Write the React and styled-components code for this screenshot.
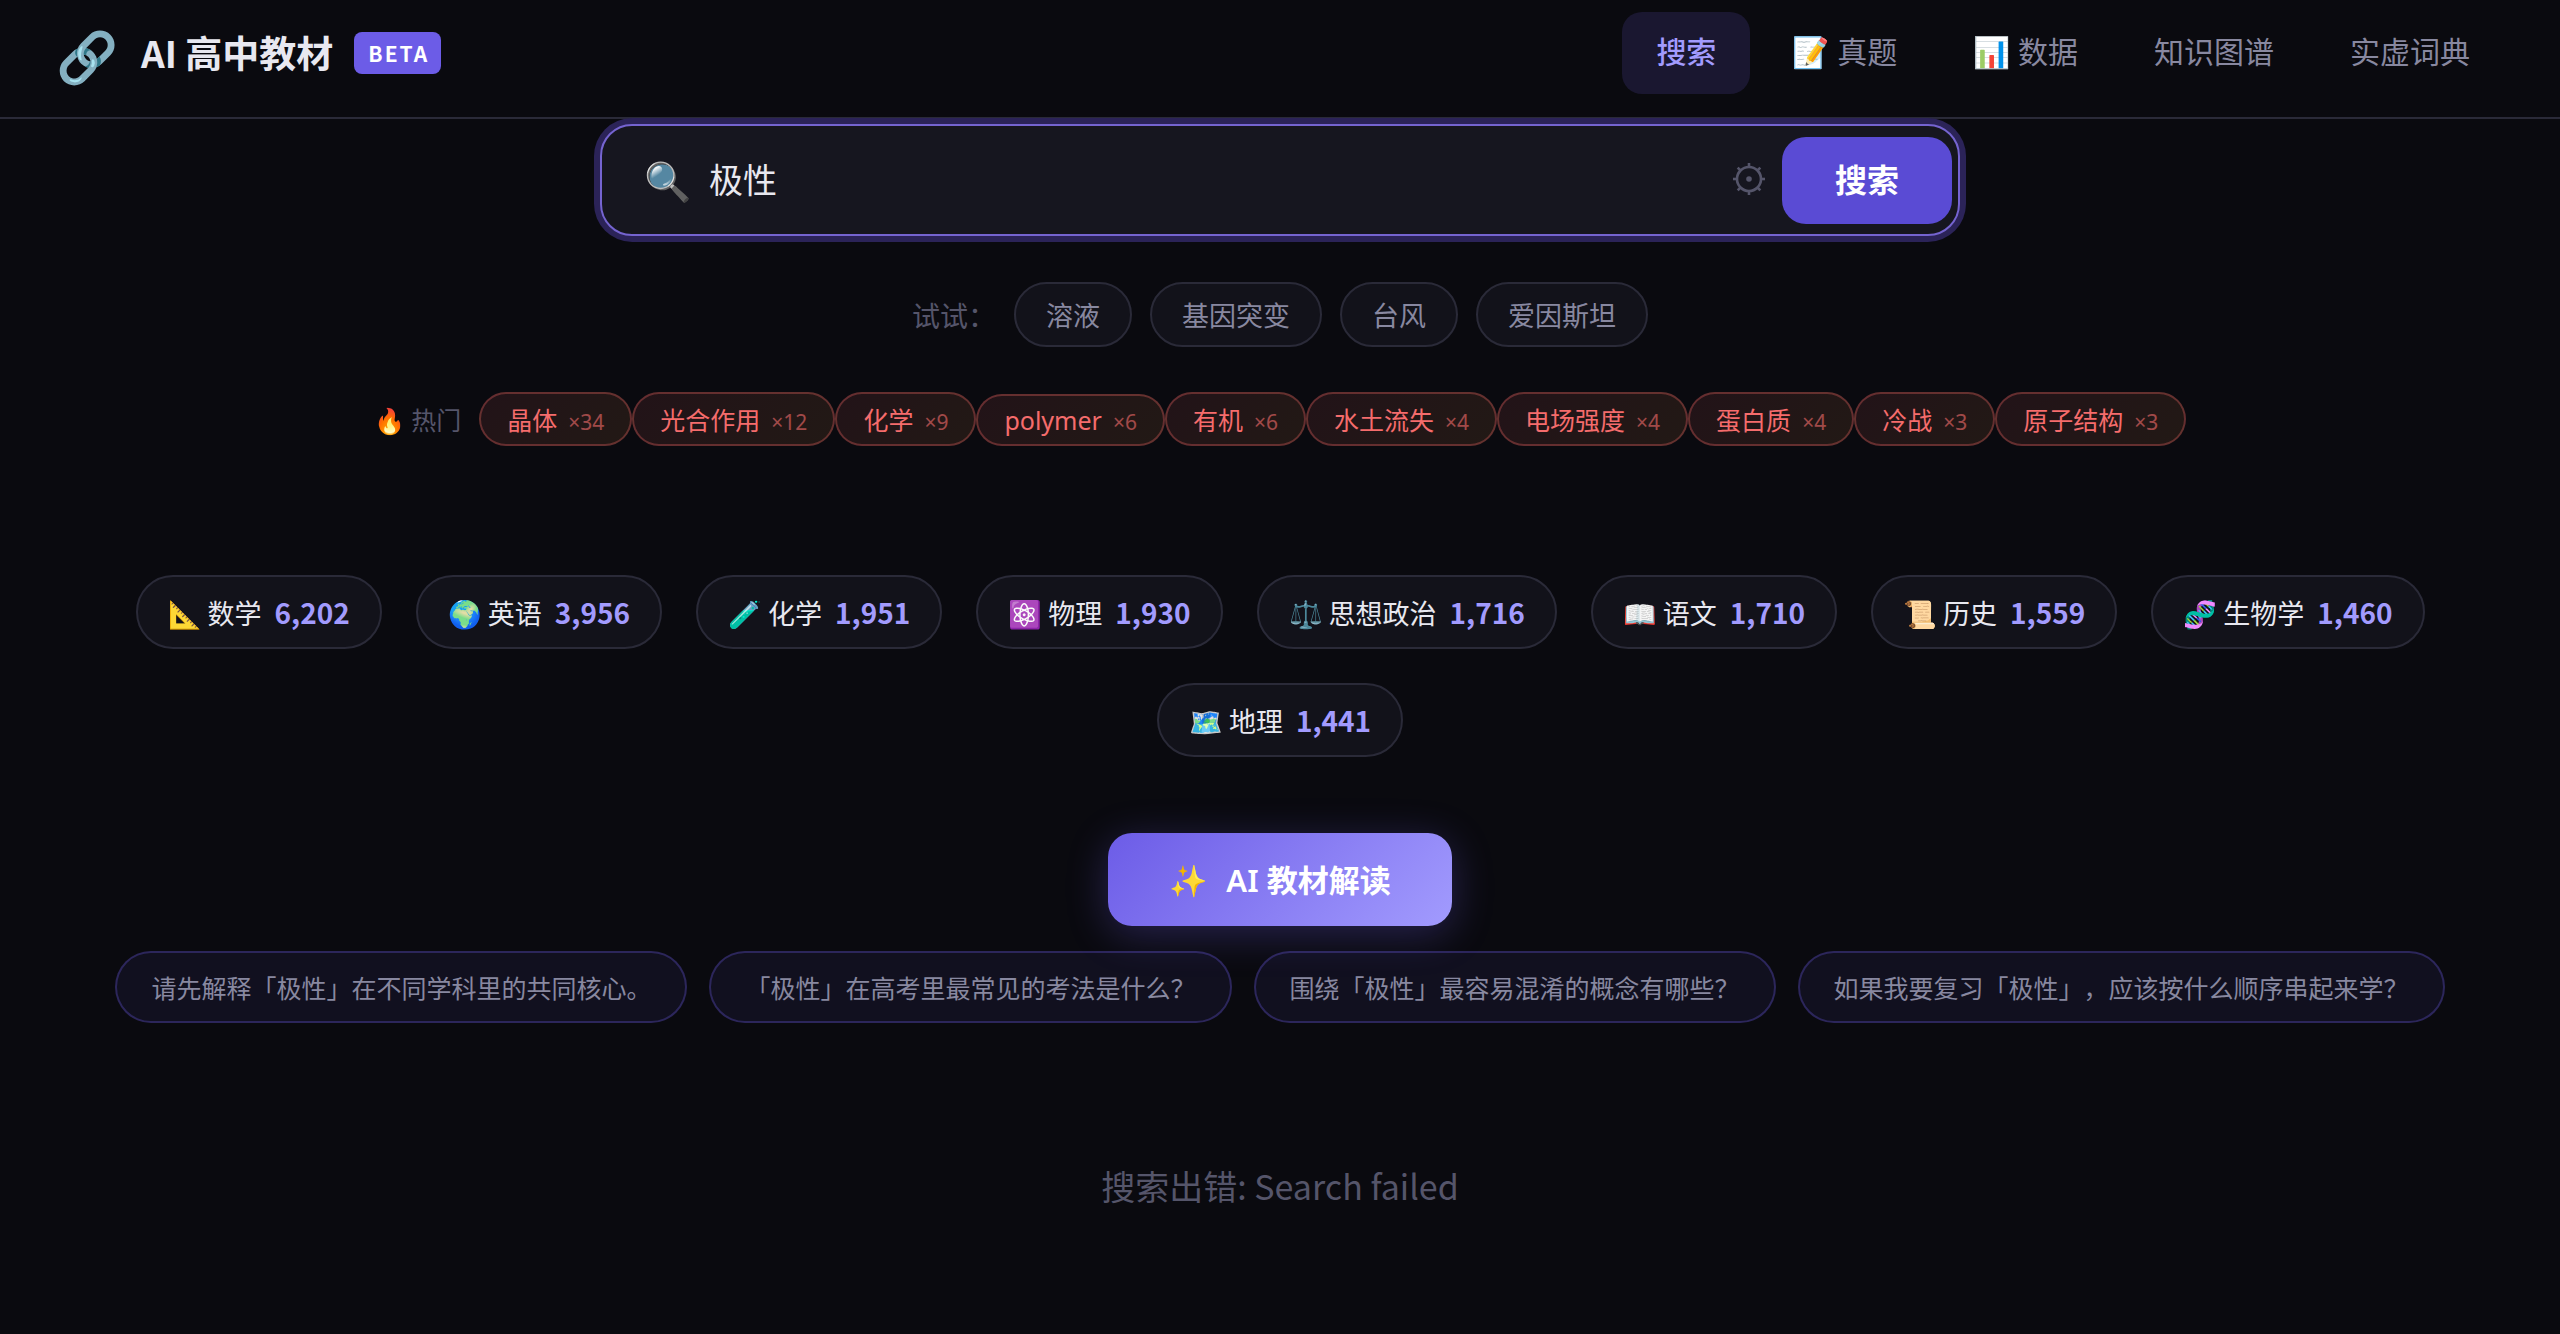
import { useState } from "react";
import styled, { createGlobalStyle } from "styled-components";

const subjects = [
  { icon: "📐", name: "数学", count: "6,202" },
  { icon: "🌍", name: "英语", count: "3,956" },
  { icon: "🧪", name: "化学", count: "1,951" },
  { icon: "⚛️", name: "物理", count: "1,930" },
  { icon: "⚖️", name: "思想政治", count: "1,716" },
  { icon: "📖", name: "语文", count: "1,710" },
  { icon: "📜", name: "历史", count: "1,559" },
  { icon: "🧬", name: "生物学", count: "1,460" },
  { icon: "🗺️", name: "地理", count: "1,441" },
];

const hotWords = [
  { word: "晶体", times: 34 },
  { word: "光合作用", times: 12 },
  { word: "化学", times: 9 },
  { word: "polymer", times: 6 },
  { word: "有机", times: 6 },
  { word: "水土流失", times: 4 },
  { word: "电场强度", times: 4 },
  { word: "蛋白质", times: 4 },
  { word: "冷战", times: 3 },
  { word: "原子结构", times: 3 },
];

const navItems = ["搜索", "📝 真题", "📊 数据", "知识图谱", "实虚词典"];
const examples = ["溶液", "基因突变", "台风", "爱因斯坦"];
const questions = [
  "请先解释「极性」在不同学科里的共同核心。",
  "「极性」在高考里最常见的考法是什么？",
  "围绕「极性」最容易混淆的概念有哪些？",
  "如果我要复习「极性」，应该按什么顺序串起来学？",
];

const uiFont = `"Noto Sans", "Noto Sans CJK SC", sans-serif`;

const GearIcon = () => (
  <svg width="34" height="34" viewBox="0 0 34 34" fill="none" stroke="currentColor" aria-hidden="true">
    <circle cx="17" cy="17" r="12" strokeWidth="2.6" />
    <circle cx="17" cy="17" r="2.8" fill="currentColor" stroke="none" />
    {[0, 45, 90, 135, 180, 225, 270, 315].map((deg) => (
      <path key={deg} d="M17 5V1" strokeWidth="2.6" transform={`rotate(${deg} 17 17)`} />
    ))}
  </svg>
);

const App = () => {
  const [query, setQuery] = useState("极性");

  return (
    <>
      <GlobalStyle />
      <Header>
        <Brand href="#">
          <BrandIcon>🔗</BrandIcon>
          <BrandName>AI 高中教材</BrandName>
          <BetaTag>BETA</BetaTag>
        </Brand>
        <Nav>
          {navItems.map((item, i) => (
            <NavLink key={item} href="#" $active={i === 0}>
              {item}
            </NavLink>
          ))}
        </Nav>
      </Header>

      <Main>
        <SearchBox onSubmit={(e) => e.preventDefault()}>
          <SearchLabel htmlFor="query" aria-label="搜索">
            🔍
          </SearchLabel>
          <SearchInput id="query" value={query} onChange={(e) => setQuery(e.target.value)} />
          <GearButton type="button" aria-label="设置">
            <GearIcon />
          </GearButton>
          <SearchButton type="submit">搜索</SearchButton>
        </SearchBox>

        <ExampleRow>
          <ExampleLabel>试试：</ExampleLabel>
          {examples.map((word) => (
            <ExampleChip key={word} onClick={() => setQuery(word)}>
              {word}
            </ExampleChip>
          ))}
        </ExampleRow>

        <HotRow>
          <HotLabel>🔥 热门</HotLabel>
          {hotWords.map(({ word, times }) => (
            <HotChip key={word} onClick={() => setQuery(word)}>
              {word}
              <HotTimes>×{times}</HotTimes>
            </HotChip>
          ))}
        </HotRow>

        <SubjectRow>
          {subjects.map(({ icon, name, count }) => (
            <SubjectChip key={name}>
              {icon} {name}
              <SubjectCount>{count}</SubjectCount>
            </SubjectChip>
          ))}
        </SubjectRow>

        <AiButton>
          <span>✨</span>
          <span>AI 教材解读</span>
        </AiButton>

        <QuestionRow>
          {questions.map((q) => (
            <QuestionChip key={q}>{q}</QuestionChip>
          ))}
        </QuestionRow>

        <ErrorText>搜索出错: Search failed</ErrorText>
      </Main>
    </>
  );
};

const GlobalStyle = createGlobalStyle`
  * {
    box-sizing: border-box;
  }
  body {
    margin: 0;
    background: #0a0a0f;
    color: #e8e8f0;
    font-family: "Noto Sans CJK SC", sans-serif;
    text-spacing-trim: space-all;
  }
  button, input {
    font-family: inherit;
    margin: 0;
  }
  button {
    cursor: pointer;
    text-spacing-trim: inherit;
  }
`;

const Header = styled.header`
  display: flex;
  align-items: center;
  justify-content: space-between;
  padding: 12px 56px 23px;
  border-bottom: 2px solid #2a2a38;
`;

const Brand = styled.a`
  display: flex;
  align-items: center;
  color: #e8e8f0;
  text-decoration: none;
`;

const BrandIcon = styled.span`
  font-size: 50px;
  line-height: 56px;
`;

const BrandName = styled.span`
  margin: 0 21px 0 23px;
  padding-bottom: 2px;
  font-size: 37px;
  font-weight: 700;
  line-height: 56px;
`;

const BetaTag = styled.span`
  padding: 0 12px 0 14px;
  border-radius: 8px;
  background: #6c5ce7;
  color: #fff;
  font-size: 21px;
  font-weight: 700;
  line-height: 42px;
  letter-spacing: 2px;
`;

const Nav = styled.nav`
  display: flex;
  gap: 8px;
`;

const NavLink = styled.a`
  padding: 0 34px 2px;
  border-radius: 20px;
  background: ${({ $active }) => ($active ? "#1a1730" : "transparent")};
  color: ${({ $active }) => ($active ? "#a29bfe" : "#8888a0")};
  font-family: ${uiFont};
  font-size: 30px;
  font-weight: ${({ $active }) => ($active ? 500 : 400)};
  line-height: 80px;
  text-decoration: none;
`;

const Main = styled.main`
  display: flex;
  flex-direction: column;
  align-items: center;
  padding: 5px 64px 64px;
`;

const SearchBox = styled.form`
  display: flex;
  align-items: center;
  width: 100%;
  max-width: 1360px;
  height: 112px;
  padding: 0 6px 0 42px;
  border: 2px solid #7564d0;
  border-radius: 32px;
  background: #16161f;
  box-shadow: 0 0 0 6px #2b2358;
`;

const SearchLabel = styled.label`
  font-family: ${uiFont};
  font-size: 38px;
  line-height: 48px;
`;

const SearchInput = styled.input`
  flex: 1;
  min-width: 0;
  padding: 0 0 0 18px;
  border: 0;
  outline: 0;
  background: transparent;
  color: #e8e8f0;
  font-family: ${uiFont};
  font-size: 34px;
  line-height: 48px;
`;

const GearButton = styled.button`
  display: flex;
  padding: 0 16px 3px;
  border: 0;
  background: transparent;
  color: #55556a;
`;

const SearchButton = styled.button`
  width: 170px;
  height: 87px;
  border: 0;
  border-radius: 24px;
  background: #5a4bd4;
  color: #fff;
  font-family: ${uiFont};
  font-size: 32px;
  font-weight: 700;
  line-height: 40px;
`;

const ExampleRow = styled.div`
  display: flex;
  align-items: center;
  gap: 18px;
  margin-top: 46px;
`;

const ExampleLabel = styled.span`
  color: #55556a;
  font-size: 28px;
`;

const ExampleChip = styled.button`
  height: 65px;
  padding: 0 30px;
  border: 2px solid #2a2a38;
  border-radius: 33px;
  background: #12121a;
  color: #8888a0;
  font-size: 27px;
`;

const HotRow = styled.div`
  display: flex;
  align-items: baseline;
  margin-top: 45px;
  font-family: ${uiFont};
`;

const HotLabel = styled.span`
  margin-right: 18px;
  color: #55556a;
  font-size: 25px;
`;

const HotChip = styled.button`
  padding: 7px 26px;
  border: 2px solid rgba(255, 107, 107, 0.3);
  border-radius: 27px;
  background: linear-gradient(135deg, rgba(255, 107, 107, 0.1), rgba(255, 165, 80, 0.1));
  color: #f56c6c;
  font-size: 25px;
`;

const HotTimes = styled.span`
  margin-left: 11px;
  font-size: 21px;
  opacity: 0.6;
`;

const SubjectRow = styled.div`
  display: flex;
  flex-wrap: wrap;
  justify-content: center;
  gap: 34px;
  margin-top: 129px;
`;

const SubjectChip = styled.button`
  height: 74px;
  padding: 0 30px;
  border: 2px solid #2a2a38;
  border-radius: 37px;
  background: #12121a;
  color: #e8e8f0;
  font-size: 27px;
`;

const SubjectCount = styled.span`
  margin-left: 13px;
  color: #a29bfe;
  font-size: 28px;
  font-weight: 700;
`;

const AiButton = styled.button`
  display: flex;
  align-items: center;
  gap: 18px;
  height: 93px;
  margin-top: 76px;
  padding: 0 61px;
  border: 0;
  border-radius: 24px;
  background: linear-gradient(135deg, #6c5ce7, #a29bfe);
  box-shadow: 0 8px 40px rgba(108, 92, 231, 0.3);
  color: #fff;
  font-family: ${uiFont};
  font-size: 31px;
  font-weight: 600;
  line-height: 40px;
`;

const QuestionRow = styled.div`
  display: flex;
  flex-wrap: wrap;
  justify-content: center;
  gap: 22px;
  margin-top: 25px;
`;

const QuestionChip = styled.button`
  height: 72px;
  padding: 0 34px;
  border: 2px solid rgba(108, 92, 231, 0.3);
  border-radius: 36px;
  background: rgba(108, 92, 231, 0.08);
  color: #8888a0;
  font-family: ${uiFont};
  font-size: 25px;
`;

const ErrorText = styled.p`
  margin: 135px 0 0;
  color: #55556a;
  font-size: 34px;
  line-height: 56px;
`;

export default App;
